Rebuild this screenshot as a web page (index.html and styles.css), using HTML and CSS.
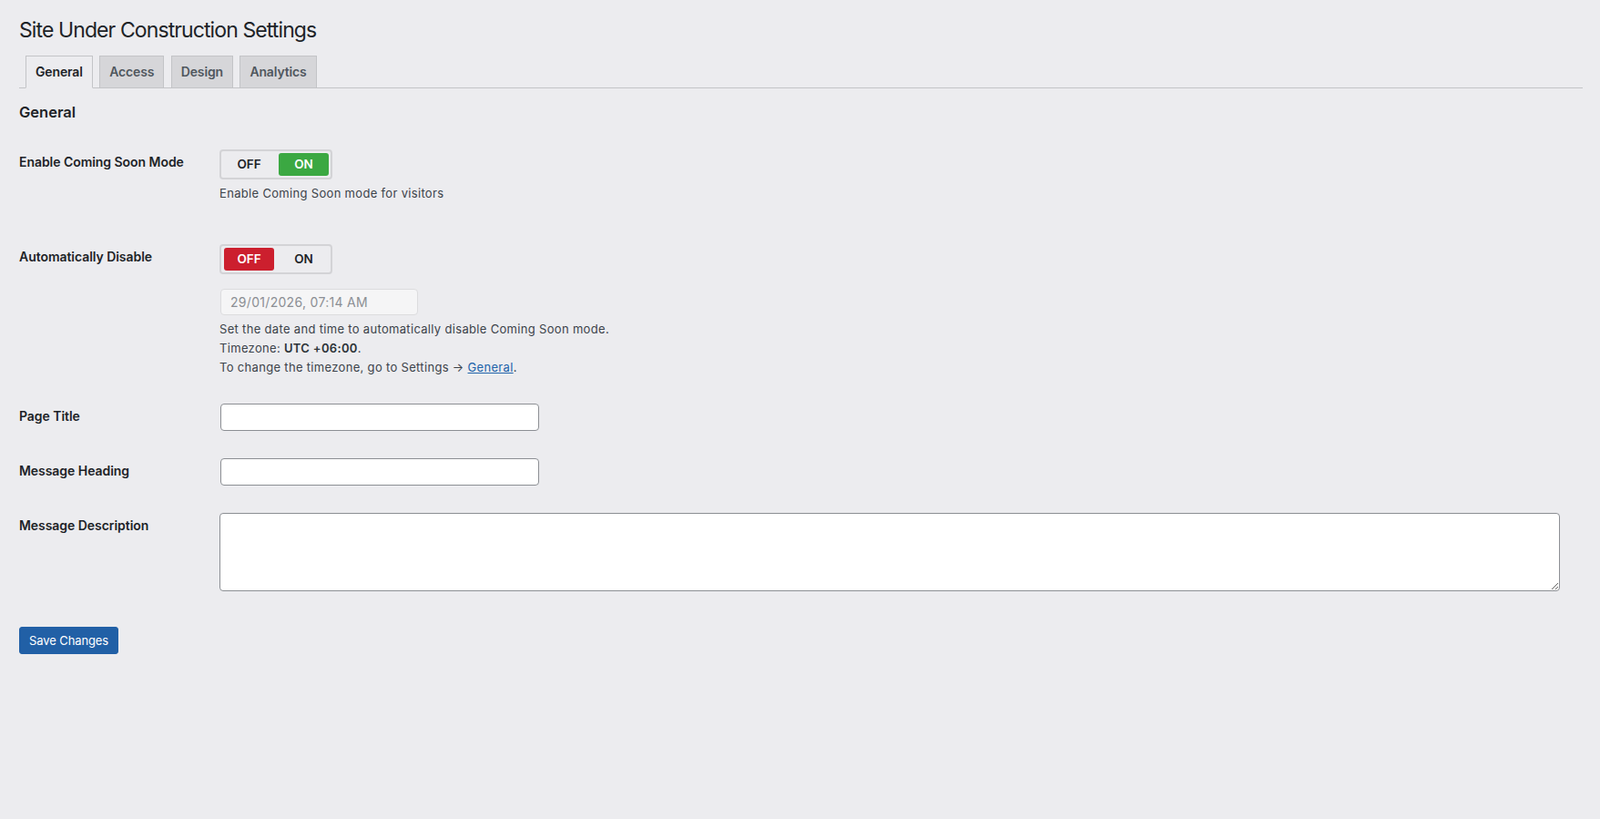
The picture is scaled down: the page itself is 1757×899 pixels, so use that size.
FILE: index.html
```html
<!DOCTYPE html>
<html lang="en">
<head>
<meta charset="utf-8">
<title>Site Under Construction Settings</title>
<link rel="stylesheet" href="styles.css">
</head>
<body>
<div class="wrap">
  <h1 class="page-title">Site Under Construction Settings</h1>
  <nav class="tabs">
    <a class="tab tab-active" href="#">General</a>
    <a class="tab" href="#">Access</a>
    <a class="tab" href="#">Design</a>
    <a class="tab" href="#">Analytics</a>
  </nav>
  <h2 class="section-title">General</h2>
  <form class="settings">
    <div class="row">
      <div class="label">Enable Coming Soon Mode</div>
      <div class="field">
        <div class="toggle">
          <span class="toggle-btn">OFF</span>
          <span class="toggle-btn on-active">ON</span>
        </div>
        <p class="description desc-spaced"><span class="desc-line">Enable Coming Soon mode for visitors</span></p>
      </div>
    </div>
    <div class="row">
      <div class="label">Automatically Disable</div>
      <div class="field field-tight">
        <div class="toggle">
          <span class="toggle-btn off-active">OFF</span>
          <span class="toggle-btn">ON</span>
        </div>
        <input class="date-input" type="text" value="29/01/2026, 07:14 AM" disabled>
        <p class="description">
          <span class="desc-line">Set the date and time to automatically disable Coming Soon mode.</span>
          <span class="desc-line">Timezone: <strong>UTC +06:00</strong>.</span>
          <span class="desc-line">To change the timezone, go to Settings → <a class="link" href="#">General</a>.</span>
        </p>
      </div>
    </div>
    <div class="row">
      <div class="label">Page Title</div>
      <div class="field"><input class="text-input" type="text"></div>
    </div>
    <div class="row">
      <div class="label">Message Heading</div>
      <div class="field"><input class="text-input" type="text"></div>
    </div>
    <div class="row">
      <div class="label">Message Description</div>
      <div class="field field-wide"><textarea class="textarea"></textarea></div>
    </div>
    <div class="submit">
      <button class="button-primary" type="button">Save Changes</button>
    </div>
  </form>
</div>
</body>
</html>
```
FILE: styles.css
```css
* { box-sizing: border-box; }
html, body { margin: 0; padding: 0; }
body {
  background: #ececef;
  color: #1d2327;
  font-family: "Inter", "Roboto", sans-serif;
  font-size: 13px;
}
.wrap {
  padding: 18px 19px 0 21px;
}
.page-title {
  margin: 0;
  font-size: 23px;
  line-height: 30px;
  font-weight: 400;
  letter-spacing: -0.9px;
  color: #1d2327;
}
.tabs {
  margin-top: 13px;
  display: flex;
  border-bottom: 1px solid #c3c4c7;
}
.tab {
  display: block;
  margin: 0 0 -1px 7px;
  padding: 5px 10px;
  border: 1px solid #c3c4c7;
  background: #d6d6d9;
  color: #50575e;
  font-size: 14px;
  line-height: 24px;
  font-weight: 600;
  letter-spacing: -0.15px;
  text-decoration: none;
}
.tab + .tab { margin-left: 7.5px; }
.tab-active {
  background: #ececef;
  border-bottom-color: #ececef;
  color: #1d2327;
}
.section-title {
  margin: 15px 0 0;
  font-size: 16.5px;
  line-height: 22px;
  font-weight: 600;
}
.settings { margin-top: 15px; }
.row {
  display: grid;
  grid-template-columns: 220px 1fr;
}
.label {
  padding-top: 20px;
  font-size: 14px;
  line-height: 18px;
  font-weight: 600;
  letter-spacing: -0.05px;
  color: #1d2327;
}
.field {
  padding: 15px 0;
}
.field-tight { padding-bottom: 14px; }
.field-wide { padding-right: 25px; }
.toggle {
  display: flex;
  gap: 5px;
  width: 124px;
  height: 33px;
  padding: 2px 2px 2px 3px;
  border: 2px solid #d3d3d6;
  border-radius: 4px;
}
.toggle-btn {
  width: 55px;
  height: 25px;
  border-radius: 3px;
  font-size: 13.5px;
  font-weight: 600;
  line-height: 25px;
  text-align: center;
  color: #1d2327;
}
.on-active { background: #3ba842; color: #fff; }
.off-active { background: #cc1f2e; color: #fff; }
.description {
  margin: 5px 0 0;
  font-size: 13px;
  line-height: 21px;
  letter-spacing: 0.32px;
  color: #3c434a;
}
.desc-line {
  display: block;
  height: 21px;
  white-space: nowrap;
}
.desc-spaced { margin-bottom: 15px; }
.description strong { font-weight: 600; color: #2c3338; }
.link { color: #2163aa; text-decoration: underline; }
.date-input {
  display: block;
  margin: 16px 0 0 1px;
  width: 217px;
  height: 29px;
  padding: 0 10px;
  border: 1px solid #dcdcde;
  border-radius: 4px;
  background: #f5f5f6;
  color: #8c8f94;
  font-family: "Inter", "Roboto", sans-serif;
  font-size: 14px;
  letter-spacing: 0.3px;
}
.text-input {
  display: block;
  margin: 0 0 0 1px;
  width: 350px;
  height: 30px;
  padding: 0 8px;
  border: 1px solid #8c8f94;
  border-radius: 4px;
  background: #fff;
  font-family: "Inter", "Roboto", sans-serif;
  font-size: 14px;
}
.textarea {
  display: block;
  width: 100%;
  height: 86px;
  margin: 0;
  padding: 2px 6px;
  border: 1px solid #8c8f94;
  border-radius: 4px;
  background: #fff;
  font-family: "Inter", "Roboto", sans-serif;
  font-size: 14px;
}
.submit {
  margin-top: 24px;
}
.button-primary {
  height: 30px;
  padding: 0 10px;
  border: 1px solid #2160a6;
  border-radius: 3px;
  background: #2160a6;
  color: #fff;
  font-family: "Inter", "Roboto", sans-serif;
  font-size: 13px;
  line-height: 28px;
  letter-spacing: -0.1px;
  cursor: pointer;
}
```
